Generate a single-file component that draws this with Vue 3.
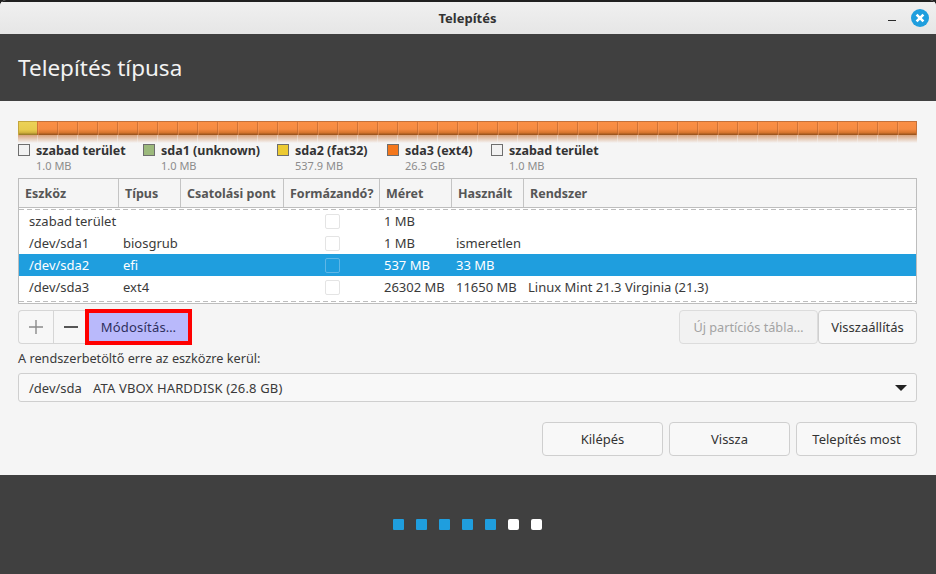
<script setup>
const legend = [
  { name: 'szabad terület', size: '1.0 MB', color: '#f2f2f2', w: 125 },
  { name: 'sda1 (unknown)', size: '1.0 MB', color: '#9cb97c', w: 134 },
  { name: 'sda2 (fat32)', size: '537.9 MB', color: '#ecca32', w: 110 },
  { name: 'sda3 (ext4)', size: '26.3 GB', color: '#f4771c', w: 104 },
  { name: 'szabad terület', size: '1.0 MB', color: '#f2f2f2', w: 125 }
]
const cols = [
  { label: 'Eszköz', w: 100 }, { label: 'Típus', w: 62 }, { label: 'Csatolási pont', w: 103 },
  { label: 'Formázandó?', w: 96 }, { label: 'Méret', w: 72 }, { label: 'Használt', w: 72 }, { label: 'Rendszer', w: 394 }
]
const rows = [
  { dev: 'szabad terület', type: '', size: '1 MB', used: '', sys: '' },
  { dev: '/dev/sda1', type: 'biosgrub', size: '1 MB', used: 'ismeretlen', sys: '' },
  { dev: '/dev/sda2', type: 'efi', size: '537 MB', used: '33 MB', sys: '', sel: true },
  { dev: '/dev/sda3', type: 'ext4', size: '26302 MB', used: '11650 MB', sys: 'Linux Mint 21.3 Virginia (21.3)' }
]
const dots = [1, 1, 1, 1, 1, 0, 0]
</script>

<template>
  <div class="win">
    <div class="titlebar">
      <span class="title">Telepítés</span>
      <span class="min"></span>
      <svg class="close" width="18" height="18" viewBox="0 0 18 18">
        <circle cx="9" cy="9" r="9" fill="#1f9ede" />
        <path d="M5.6 5.6 12.4 12.4M12.4 5.6 5.6 12.4" stroke="#fff" stroke-width="2.6" fill="none" />
      </svg>
    </div>
    <div class="head">Telepítés típusa</div>
    <div class="body">
      <div class="bar"><div class="bar-y"></div><div class="bar-o"></div></div>
      <div class="reflect"></div>
      <div class="legend">
        <div v-for="(l, i) in legend" :key="i" class="leg" :style="{ width: l.w + 'px' }">
          <span class="swatch" :style="{ background: l.color }"></span>
          <div>
            <div class="leg-name">{{ l.name }}</div>
            <div class="leg-size">{{ l.size }}</div>
          </div>
        </div>
      </div>
      <div class="table">
        <div class="thead">
          <div v-for="c in cols" :key="c.label" class="th" :style="{ width: c.w + 'px' }">{{ c.label }}</div>
        </div>
        <div class="tbody">
          <div v-for="r in rows" :key="r.dev" class="tr" :class="{ sel: r.sel }">
            <span class="c1">{{ r.dev }}</span>
            <span class="c2">{{ r.type }}</span>
            <span class="c3"></span>
            <span class="c4"><i class="chk"></i></span>
            <span class="c5">{{ r.size }}</span>
            <span class="c6">{{ r.used }}</span>
            <span class="c7">{{ r.sys }}</span>
          </div>
        </div>
      </div>
      <div class="tools">
        <div class="group">
          <div class="tool plus">
            <svg width="14" height="14" viewBox="0 0 14 14"><path d="M7 0v14M0 7h14" stroke="#8a8a8a" stroke-width="1.4" /></svg>
          </div>
          <div class="tool minus">
            <svg width="14" height="14" viewBox="0 0 14 14"><path d="M0 7h14" stroke="#2d2d2d" stroke-width="1.6" /></svg>
          </div>
          <div class="edit">Módosítás…</div>
        </div>
        <div class="spacer"></div>
        <div class="btn new">Új partíciós tábla…</div>
        <div class="btn back">Visszaállítás</div>
      </div>
      <div class="label">A rendszerbetöltő erre az eszközre kerül:</div>
      <div class="combo">
        <span class="combo-dev">/dev/sda</span>
        <span class="combo-name">ATA VBOX HARDDISK (26.8 GB)</span>
        <span class="arrow"></span>
      </div>
      <div class="actions">
        <div class="btn act">Kilépés</div>
        <div class="btn act">Vissza</div>
        <div class="btn act">Telepítés most</div>
      </div>
    </div>
    <div class="foot">
      <span v-for="(d, i) in dots" :key="i" class="dot" :class="{ on: d }"></span>
    </div>
  </div>
</template>

<style>
html, body { margin: 0; background: #202020; }
</style>

<style scoped>
.win {
  width: 936px; height: 574px; overflow: hidden; display: flex; flex-direction: column;
  font-family: "Noto Sans", sans-serif; font-size: 13px; color: #3d3d3d;
  background: #f5f5f5; border-radius: 6px 6px 0 0;
}
.titlebar {
  height: 34px; flex: none; box-sizing: border-box; background: linear-gradient(#f0f0f0, #e6e6e6);
  display: flex; align-items: center; justify-content: center; position: relative;
  border-top: 2px solid #202020; padding-right: 1px;
}
.title { font-weight: 700; font-size: 13px; color: #333; }
.min { position: absolute; left: 888px; top: 18px; width: 8px; height: 1px; background: #2a2a2a; }
.close { position: absolute; left: 911px; top: 7px; }
.head {
  height: 67px; flex: none; box-sizing: border-box; background: #404040; color: #f2f2f2;
  font-size: 22.5px; padding: 16px 18px 0; line-height: 36px;
}
.body { flex: 1; box-sizing: border-box; padding: 20px 19px 0 18px; background: #f5f5f5; }
.bar { display: flex; height: 14px; box-sizing: border-box; }
.bar-y {
  width: 19px; flex: none; box-sizing: border-box;
  background: linear-gradient(#ecd257, #e7cb4e 60%, #d4b43e 80%, #8f7424);
  border: 1px solid #c4a63c; border-right: 0; border-bottom: 0;
}
.bar-o {
  flex: 1; box-sizing: border-box; border: 1px solid #c4713a; border-left: 0; border-bottom: 0;
  background:
    repeating-linear-gradient(90deg, #f9a36a66 0, #f9a36a66 1px, transparent 1px, transparent 20px) 1px 0,
    repeating-linear-gradient(90deg, #b8642e99 0, #b8642e99 1px, transparent 1px, transparent 20px) 0 0,
    linear-gradient(#fb8f45, #f58b42 55%, #d9772f 80%, #8f4f1a);
}
.reflect {
  height: 8px;
  background:
    repeating-linear-gradient(90deg, #f5f5f500 0, #f5f5f500 19px, #f5f5f566 19px, #f5f5f566 20px) 0 0,
    linear-gradient(#d8a27c, #f5f5f5);
}
.legend { display: flex; height: 35px; box-sizing: border-box; }
.leg { display: flex; gap: 6px; }
.swatch { width: 10px; height: 10px; border: 1px solid #6e6e6e; margin-top: 1px; flex: none; }
.leg-name { font-weight: 700; font-size: 12.5px; line-height: 14px; padding-top: 1px; color: #333; white-space: nowrap; }
.leg-size { font-size: 11px; line-height: 15px; color: #8c8c8c; }
.table { height: 126px; box-sizing: border-box; border: 1px solid #bdbdbd; background: #fff; }
.thead { display: flex; height: 28px; background: #f5f5f5; border-bottom: 1px solid #bdbdbd; }
.th {
  flex: none; box-sizing: border-box; padding: 1px 0 0 6px; line-height: 27px; font-weight: 700;
  font-size: 12.5px; color: #565656; border-right: 1px solid #c4c4c4; white-space: nowrap;
}
.th:last-child { border-right: 0; }
.tbody {
  height: 96px; box-sizing: border-box; padding-top: 2px; position: relative;
  background-image:
    repeating-linear-gradient(90deg, #bdbdbd 0, #bdbdbd 5px, #fff 5px, #fff 8px),
    repeating-linear-gradient(90deg, #bdbdbd 0, #bdbdbd 5px, #fff 5px, #fff 8px);
  background-size: 100% 1px; background-repeat: no-repeat; background-position: 0 1px, 0 93px;
}
.tr { display: flex; height: 22px; line-height: 22px; color: #3a3a3a; white-space: nowrap; align-items: center; }
.tr.sel { background: #1f9ede; color: #fff; }
.tr span { flex: none; box-sizing: border-box; display: block; overflow: visible; }
.c1 { width: 104px; padding-left: 10px; }
.c2 { width: 60px; }
.c3 { width: 101px; }
.c4 { width: 100px; padding-left: 41px; display: flex !important; align-items: center; height: 22px; }
.c5 { width: 72px; }
.c6 { width: 72px; }
.c7 { width: 380px; }
.chk { display: block; width: 13px; height: 13px; border: 1px solid #e4e4e4; border-radius: 2px; background: #fff; }
.sel .chk { background: #1f9ede; border-color: #5fb6e6; }
.tools { display: flex; margin-top: 6px; height: 34px; }
.group { display: flex; position: relative; }
.tool {
  height: 34px; box-sizing: border-box; border: 1px solid #d6d6d6; background: #f7f7f7;
  display: flex; align-items: center; justify-content: center;
}
.plus { width: 35px; border-radius: 4px 0 0 4px; border-right: 0; }
.minus { width: 33px; border-right: 0; padding-left: 2px; }
.edit {
  width: 107px; height: 36px; box-sizing: border-box; margin: -1px 0 -1px -1px;
  border: 4px solid #ff0000; background: #b9b9fb; color: #2f2f5c;
  display: flex; align-items: center; justify-content: center; font-size: 13px; letter-spacing: 0.2px;
}
.spacer { flex: 1; }
.btn {
  box-sizing: border-box; height: 34px; border: 1px solid #cfcfcf; border-radius: 4px; background: #f8f8f8;
  display: flex; align-items: center; justify-content: center; color: #333; font-size: 13px; white-space: nowrap;
}
.new { width: 139px; background: #f2f2f2; color: #a3a3a3; border-color: #dcdcdc; font-size: 12.7px; }
.back { width: 99px; }
.label { margin-top: 6px; height: 23px; line-height: 17px; font-size: 12.7px; color: #3a3a3a; }
.combo {
  height: 29px; box-sizing: border-box; border: 1px solid #cfcfcf; border-radius: 3px; background: #f8f8f8;
  display: flex; align-items: center; padding-left: 10px; color: #3a3a3a; font-size: 13px; position: relative;
}
.combo-dev { width: 64px; }
.combo-name { letter-spacing: 0.15px; }
.arrow {
  position: absolute; right: 9px; top: 11px; width: 0; height: 0;
  border-left: 6px solid transparent; border-right: 6px solid transparent; border-top: 6px solid #222;
}
.actions { display: flex; justify-content: flex-end; gap: 6px; margin-top: 20px; }
.act { width: 121px; }
.foot {
  height: 99px; flex: none; background: #404040; display: flex; justify-content: center;
  gap: 12px; padding-top: 44px; box-sizing: border-box; padding-right: 1px;
}
.dot { width: 11px; height: 11px; background: #fff; border-radius: 2px; }
.dot.on { background: #1f9ede; border-radius: 1px; }
</style>
